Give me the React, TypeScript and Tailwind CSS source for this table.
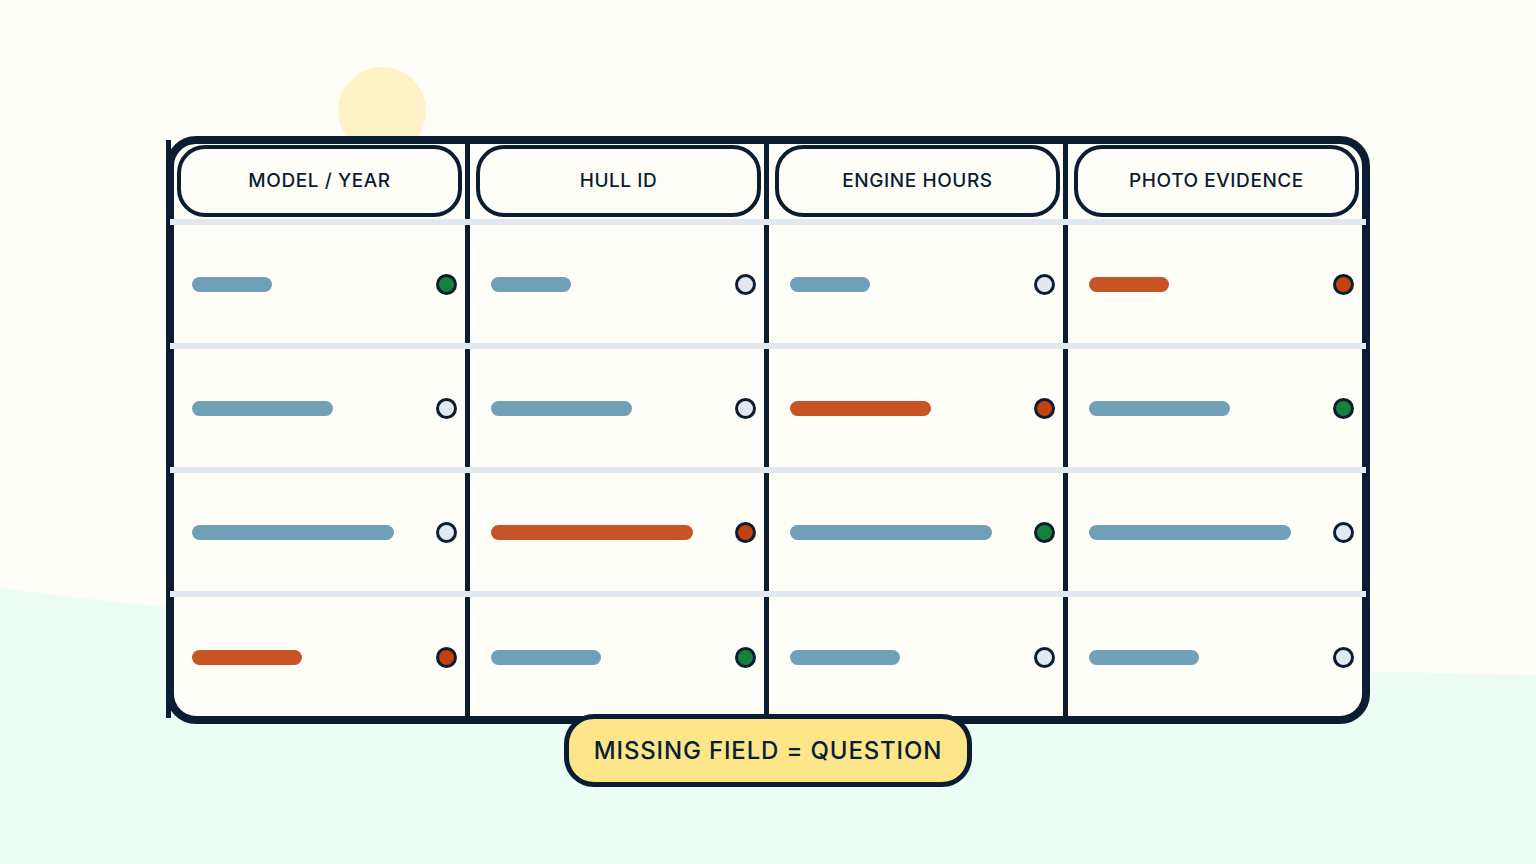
import React from "react";

type Dot = "green" | "orange" | "empty";

const rows: { width: number; dots: Dot[] }[] = [
  { width: 80, dots: ["green", "empty", "empty", "orange"] },
  { width: 141, dots: ["empty", "empty", "orange", "green"] },
  { width: 202, dots: ["empty", "orange", "green", "empty"] },
  { width: 110, dots: ["orange", "green", "empty", "empty"] },
];

const headers = ["MODEL / YEAR", "HULL ID", "ENGINE HOURS", "PHOTO EVIDENCE"];

function StatusDot({ state }: { state: Dot }) {
  const fill =
    state === "green" ? "bg-[#17803d]" : state === "orange" ? "bg-[#c2410c]" : "bg-[#e2e8f0]";
  return <div className={`w-[21px] h-[21px] rounded-full border-[3px] border-[#0b1e31] ${fill}`} />;
}

function Separator() {
  return <div className="relative z-10 ml-[4px] w-[1196px] h-[6px] bg-[#e2e8f0]" />;
}

export default function App() {
  return (
    <div
      className="relative w-full h-[864px] overflow-hidden bg-[#fffdf7]"
      style={{ fontFamily: "Inter, 'Noto Sans', sans-serif" }}
    >
      <svg className="absolute inset-0" width="1536" height="864" viewBox="0 0 1536 864">
        <path d="M0 588 Q 498 654 1536 675 L1536 864 L0 864 Z" fill="#ecfdf5" />
      </svg>
      <div className="absolute left-[338px] top-[67px] w-[88px] h-[88px] rounded-full bg-[#fef3c7]" />

      <div className="relative pt-[136px]">
        <div className="relative z-10 mx-auto w-[1204px] border-[8px] border-[#0b1e31] rounded-[30px] bg-[#fffdf7]">
          <div className="-ml-[8px] -my-[4px] w-[1196px] flex flex-col">
            <div className="grid grid-cols-4">
              {headers.map((h) => (
                <div key={h} className="border-l-[5px] border-[#0b1e31] pl-[6px] pr-[3px] pt-[5px] pb-[2px]">
                  <div className="h-[72px] pt-[1px] rounded-[28px] border-[4px] border-[#0b1e31] bg-[#fffdf7] flex items-center justify-center text-[19px] font-[550] tracking-[0.03em] text-[#0b1e31]">
                    {h}
                  </div>
                </div>
              ))}
            </div>
            {rows.map((r, i) => (
              <React.Fragment key={i}>
                <Separator />
                <div className={`grid grid-cols-4 ${i === 3 ? "h-[123px] pb-[2px]" : "h-[118px]"}`}>
                  {r.dots.map((d, j) => (
                    <div
                      key={j}
                      className="border-l-[5px] border-[#0b1e31] flex items-center justify-between pl-[21px] pr-[8px]"
                    >
                      <div
                        className={`h-[15px] rounded-full ${d === "orange" ? "bg-[#c85426]" : "bg-[#6fa0b8]"}`}
                        style={{ width: r.width }}
                      />
                      <StatusDot state={d} />
                    </div>
                  ))}
                </div>
              </React.Fragment>
            ))}
          </div>
        </div>

        <div className="relative z-20 -mt-[10px] flex justify-center">
          <div className="w-[408px] h-[73px] pt-[1px] rounded-[30px] border-[5px] border-[#0b1e31] bg-[#fde68a] flex items-center justify-center text-[24px] font-[550] tracking-[0.035em] text-[#0b1e31]">
            MISSING FIELD = QUESTION
          </div>
        </div>
      </div>
    </div>
  );
}
